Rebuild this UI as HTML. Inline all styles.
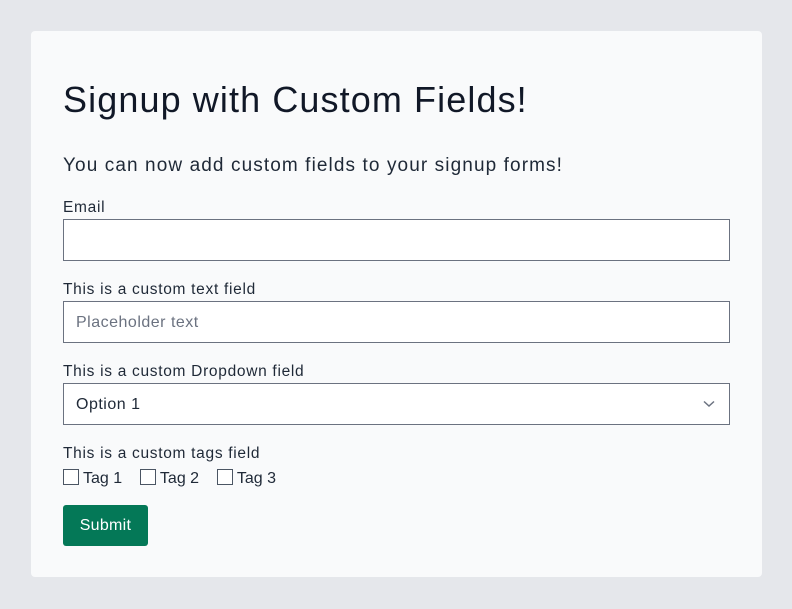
<!DOCTYPE html>
<html><head><style>
html,body{margin:0;padding:0;background:#e5e7eb;width:792px;height:609px;overflow:hidden;font-family:"Liberation Sans",sans-serif;color:#1f2937}
.card{position:absolute;left:31px;top:31px;width:731px;height:546px;background:#f9fafb;border-radius:4px}
h1{position:absolute;left:32px;top:49px;margin:0;font-weight:400;font-size:36px;line-height:40px;color:#111827;letter-spacing:1.1px}
.sub{position:absolute;left:32px;top:123px;font-size:19px;line-height:24px;letter-spacing:1.1px}
.lbl{position:absolute;left:32px;font-size:15.5px;line-height:20px;letter-spacing:0.7px}
.inp{position:absolute;left:32px;border:1px solid #6b7280;background:#fff;font-size:16px;line-height:42px;padding-left:12px;box-sizing:border-box;width:667px;height:42px;letter-spacing:0.5px}
.ph{color:#6b7280}
.cb{display:inline-block;width:14px;height:14px;border:1px solid #4b5563;background:#fff;vertical-align:-2px;margin-right:4px}
.tags{position:absolute;left:32px;top:438px;font-size:16px;line-height:20px}
.btn{position:absolute;left:32px;top:474px;width:85px;height:41px;background:#047857;border-radius:3px;color:#fff;font-size:16px;line-height:41px;text-align:center;letter-spacing:0.3px}
</style></head><body>
<div class="card">
<h1>Signup with Custom Fields!</h1>
<div class="sub">You can now add custom fields to your signup forms!</div>
<div class="lbl" style="top:167px">Email</div>
<div class="inp" style="top:188px"></div>
<div class="lbl" style="top:249px">This is a custom text field</div>
<div class="inp ph" style="top:270px">Placeholder text</div>
<div class="lbl" style="top:331px">This is a custom Dropdown field</div>
<div class="inp" style="top:352px">Option 1
<svg style="position:absolute;right:14px;top:16px" width="12" height="8" viewBox="0 0 12 8"><path d="M1 1.5 L6 6 L11 1.5" fill="none" stroke="#6b7280" stroke-width="1.5"/></svg></div>
<div class="lbl" style="top:413px">This is a custom tags field</div>
<div class="tags"><span class="cb"></span>Tag 1 &nbsp;&nbsp;&nbsp;<span class="cb"></span>Tag 2 &nbsp;&nbsp;&nbsp;<span class="cb"></span>Tag 3</div>
<div class="btn">Submit</div>
</div>
</body></html>
